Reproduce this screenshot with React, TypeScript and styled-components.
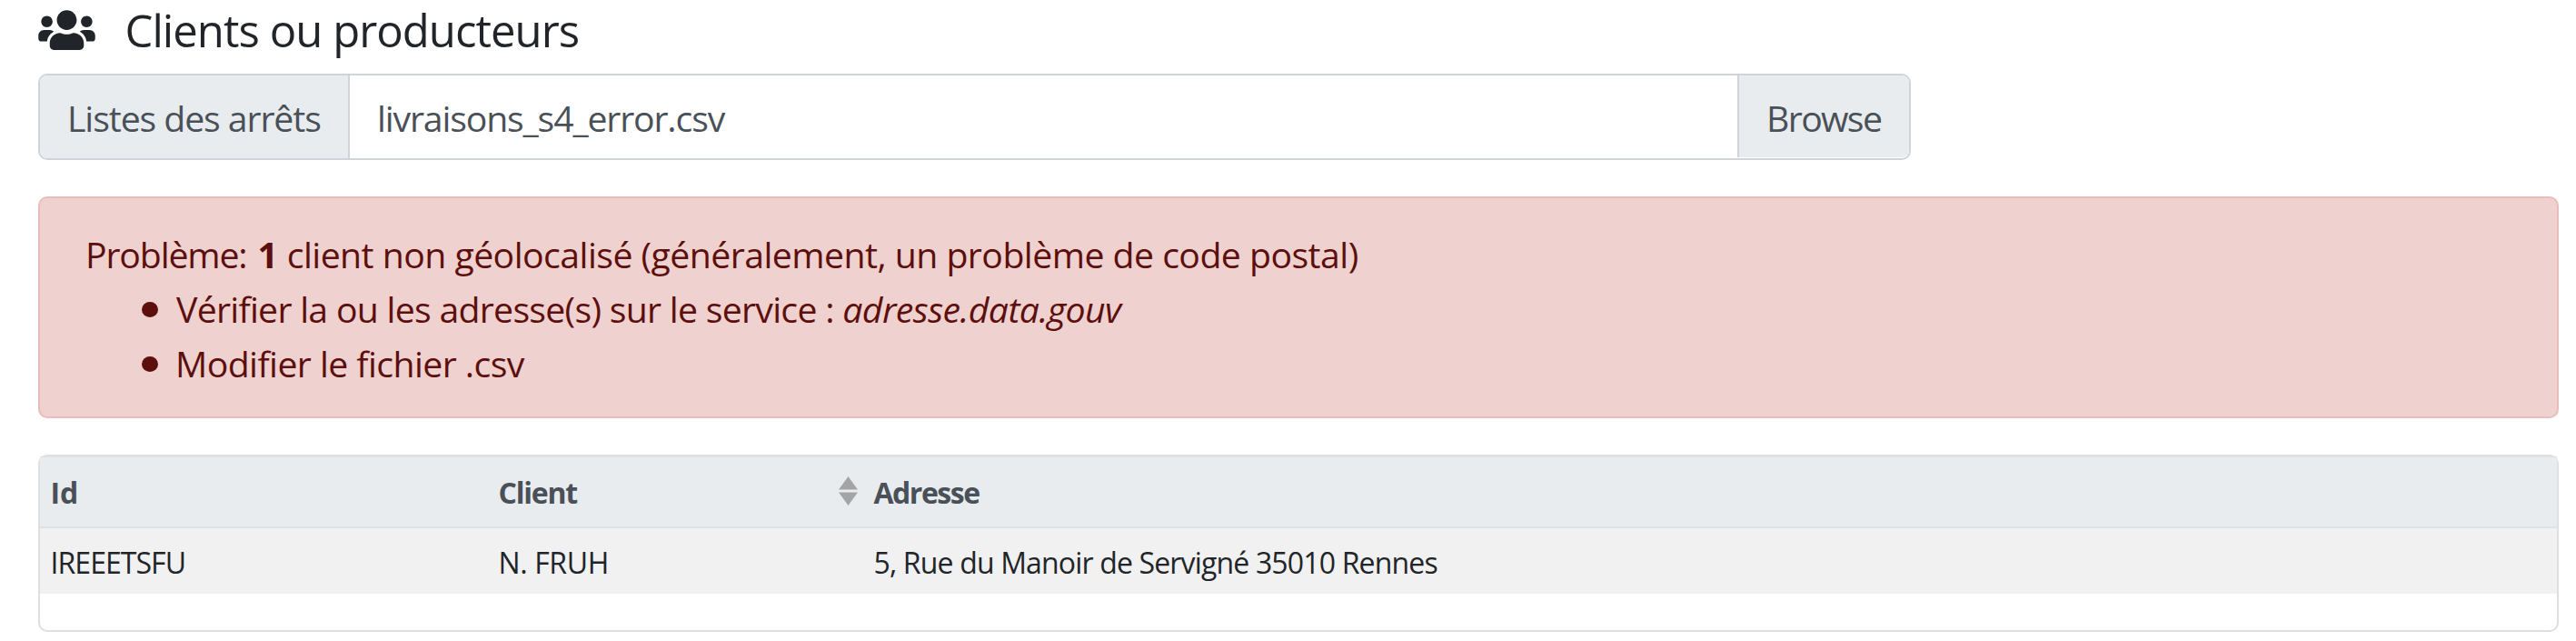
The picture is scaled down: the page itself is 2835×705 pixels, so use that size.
import React from 'react';
import styled, { createGlobalStyle } from 'styled-components';
import { FaUsers } from 'react-icons/fa';

const GlobalStyle = createGlobalStyle`
  * { box-sizing: border-box; }
  body {
    margin: 0;
    background: #fff;
    color: #212529;
    font-family: "Open Sans", "Noto Sans", sans-serif;
    font-size: 39.2px;
    line-height: 60px;
    font-variant-ligatures: none;
  }
`;

const Page = styled.main`
  width: 2835px;
  height: 705px;
  padding: 0 19px 0 42px;
  overflow: hidden;
`;

const Text = styled.span<{ $track?: number }>`
  letter-spacing: ${({ $track = 0 }) => $track}px;
  white-space: pre;
`;

const Heading = styled.h3`
  display: flex;
  align-items: flex-start;
  height: 81px;
  margin: 0;
  padding-top: 3px;
  font-size: 49px;
  font-weight: 400;
  line-height: 60px;

  svg {
    width: 63px;
    height: 50px;
    margin: 5px 32.5px 0 0;
  }
`;

const FileGroup = styled.div`
  display: flex;
  width: 2061px;
  height: 95px;
  border: 2px solid #ced4da;
  border-radius: 10px;
  color: #495057;
`;

const FileCell = styled.div`
  display: flex;
  align-items: center;
  padding: 3px 28px 0 30px;
`;

const FileLabel = styled(FileCell)`
  width: 341px;
  background: #e8ecef;
  border-right: 2px solid #ced4da;
  border-radius: 8px 0 0 8px;
`;

const FileName = styled(FileCell)`
  flex: 1;
`;

const BrowseButton = styled(FileCell)`
  width: 189px;
  margin-bottom: 1px;
  padding-top: 4px;
  background: #e8ecef;
  border-left: 2px solid #ced4da;
  border-radius: 0 8px 8px 0;
`;

const Alert = styled.section`
  height: 244px;
  margin-top: 40px;
  padding: 32px 50px 28px;
  background: #efd1cf;
  border: 2px solid #e9bdbb;
  border-radius: 10px;
  color: #5c0f0c;
`;

const Line = styled.p`
  margin: 0;
`;

const Count = styled.b`
  margin: 0 0 0 3px;
`;

const Steps = styled.ul`
  margin: 0;
  padding: 0 0 0 62px;
  list-style: none;
`;

const Step = styled.li<{ $indent: number }>`
  display: flex;
  height: 60px;

  &::before {
    content: "";
    width: 18px;
    height: 17px;
    margin: 22px ${({ $indent }) => $indent}px 0 0;
    border-radius: 50%;
    background: currentColor;
  }
`;

const TableFrame = styled.section`
  height: 195px;
  margin-top: 40px;
  border: 2px solid #dfdfdf;
  border-radius: 10px;
  font-size: 32px;
`;

const Row = styled.div`
  display: grid;
  grid-template-columns: 493px 413px 1fr;
  align-items: center;
  height: 72px;
  padding: 4px 0 0 11.5px;
  background: #f1f1f1;
`;

const HeadRow = styled(Row)`
  height: 79px;
  padding-top: 2px;
  background: #e8ecef;
  border-top: 1px solid #dee2e6;
  border-bottom: 2px solid #dee2e6;
  color: #495057;
  font-weight: 700;
`;

const SortableCell = styled.div`
  display: flex;
  align-items: center;
  justify-content: space-between;
  padding-right: 17.5px;
`;

const SortArrows = styled.svg`
  width: 21px;
  height: 32px;
  margin-top: -5px;
`;

export default function App() {
  return (
    <>
      <GlobalStyle />
      <Page>
        <Heading>
          <FaUsers />
          <Text $track={-0.94}>Clients ou producteurs</Text>
        </Heading>

        <FileGroup>
          <FileLabel>
            <Text $track={-1.08}>Listes des arrêts</Text>
          </FileLabel>
          <FileName>
            <Text $track={-1.14}>livraisons_s4_error.csv</Text>
          </FileName>
          <BrowseButton>
            <Text $track={-1.6}>Browse</Text>
          </BrowseButton>
        </FileGroup>

        <Alert>
          <Line>
            <Text $track={-1.12}>Problème: </Text>
            <Count>1</Count>
            <Text $track={-0.53}> client non géolocalisé (généralement, un problème de code postal)</Text>
          </Line>
          <Steps>
            <Step $indent={20}>
              <Text $track={-0.71}>Vérifier la ou les adresse(s) sur le service : </Text>
              <Text as="em" $track={-0.55}>adresse.data.gouv</Text>
            </Step>
            <Step $indent={19}>
              <Text $track={-0.56}>Modifier le fichier .csv</Text>
            </Step>
          </Steps>
        </Alert>

        <TableFrame>
          <HeadRow>
            <Text>Id</Text>
            <SortableCell>
              <Text $track={-1.2}>Client</Text>
              <SortArrows viewBox="0 0 21 32" fill="#a3a4a5">
                <path d="M10.5 0 21 14.5H0z" />
                <path d="M10.5 32 21 17.5H0z" />
              </SortArrows>
            </SortableCell>
            <Text $track={-1.48}>Adresse</Text>
          </HeadRow>
          <Row>
            <Text $track={-0.94}>IREEETSFU</Text>
            <Text $track={-0.37}>N. FRUH</Text>
            <Text $track={-0.84}>5, Rue du Manoir de Servigné 35010 Rennes</Text>
          </Row>
        </TableFrame>
      </Page>
    </>
  );
}
